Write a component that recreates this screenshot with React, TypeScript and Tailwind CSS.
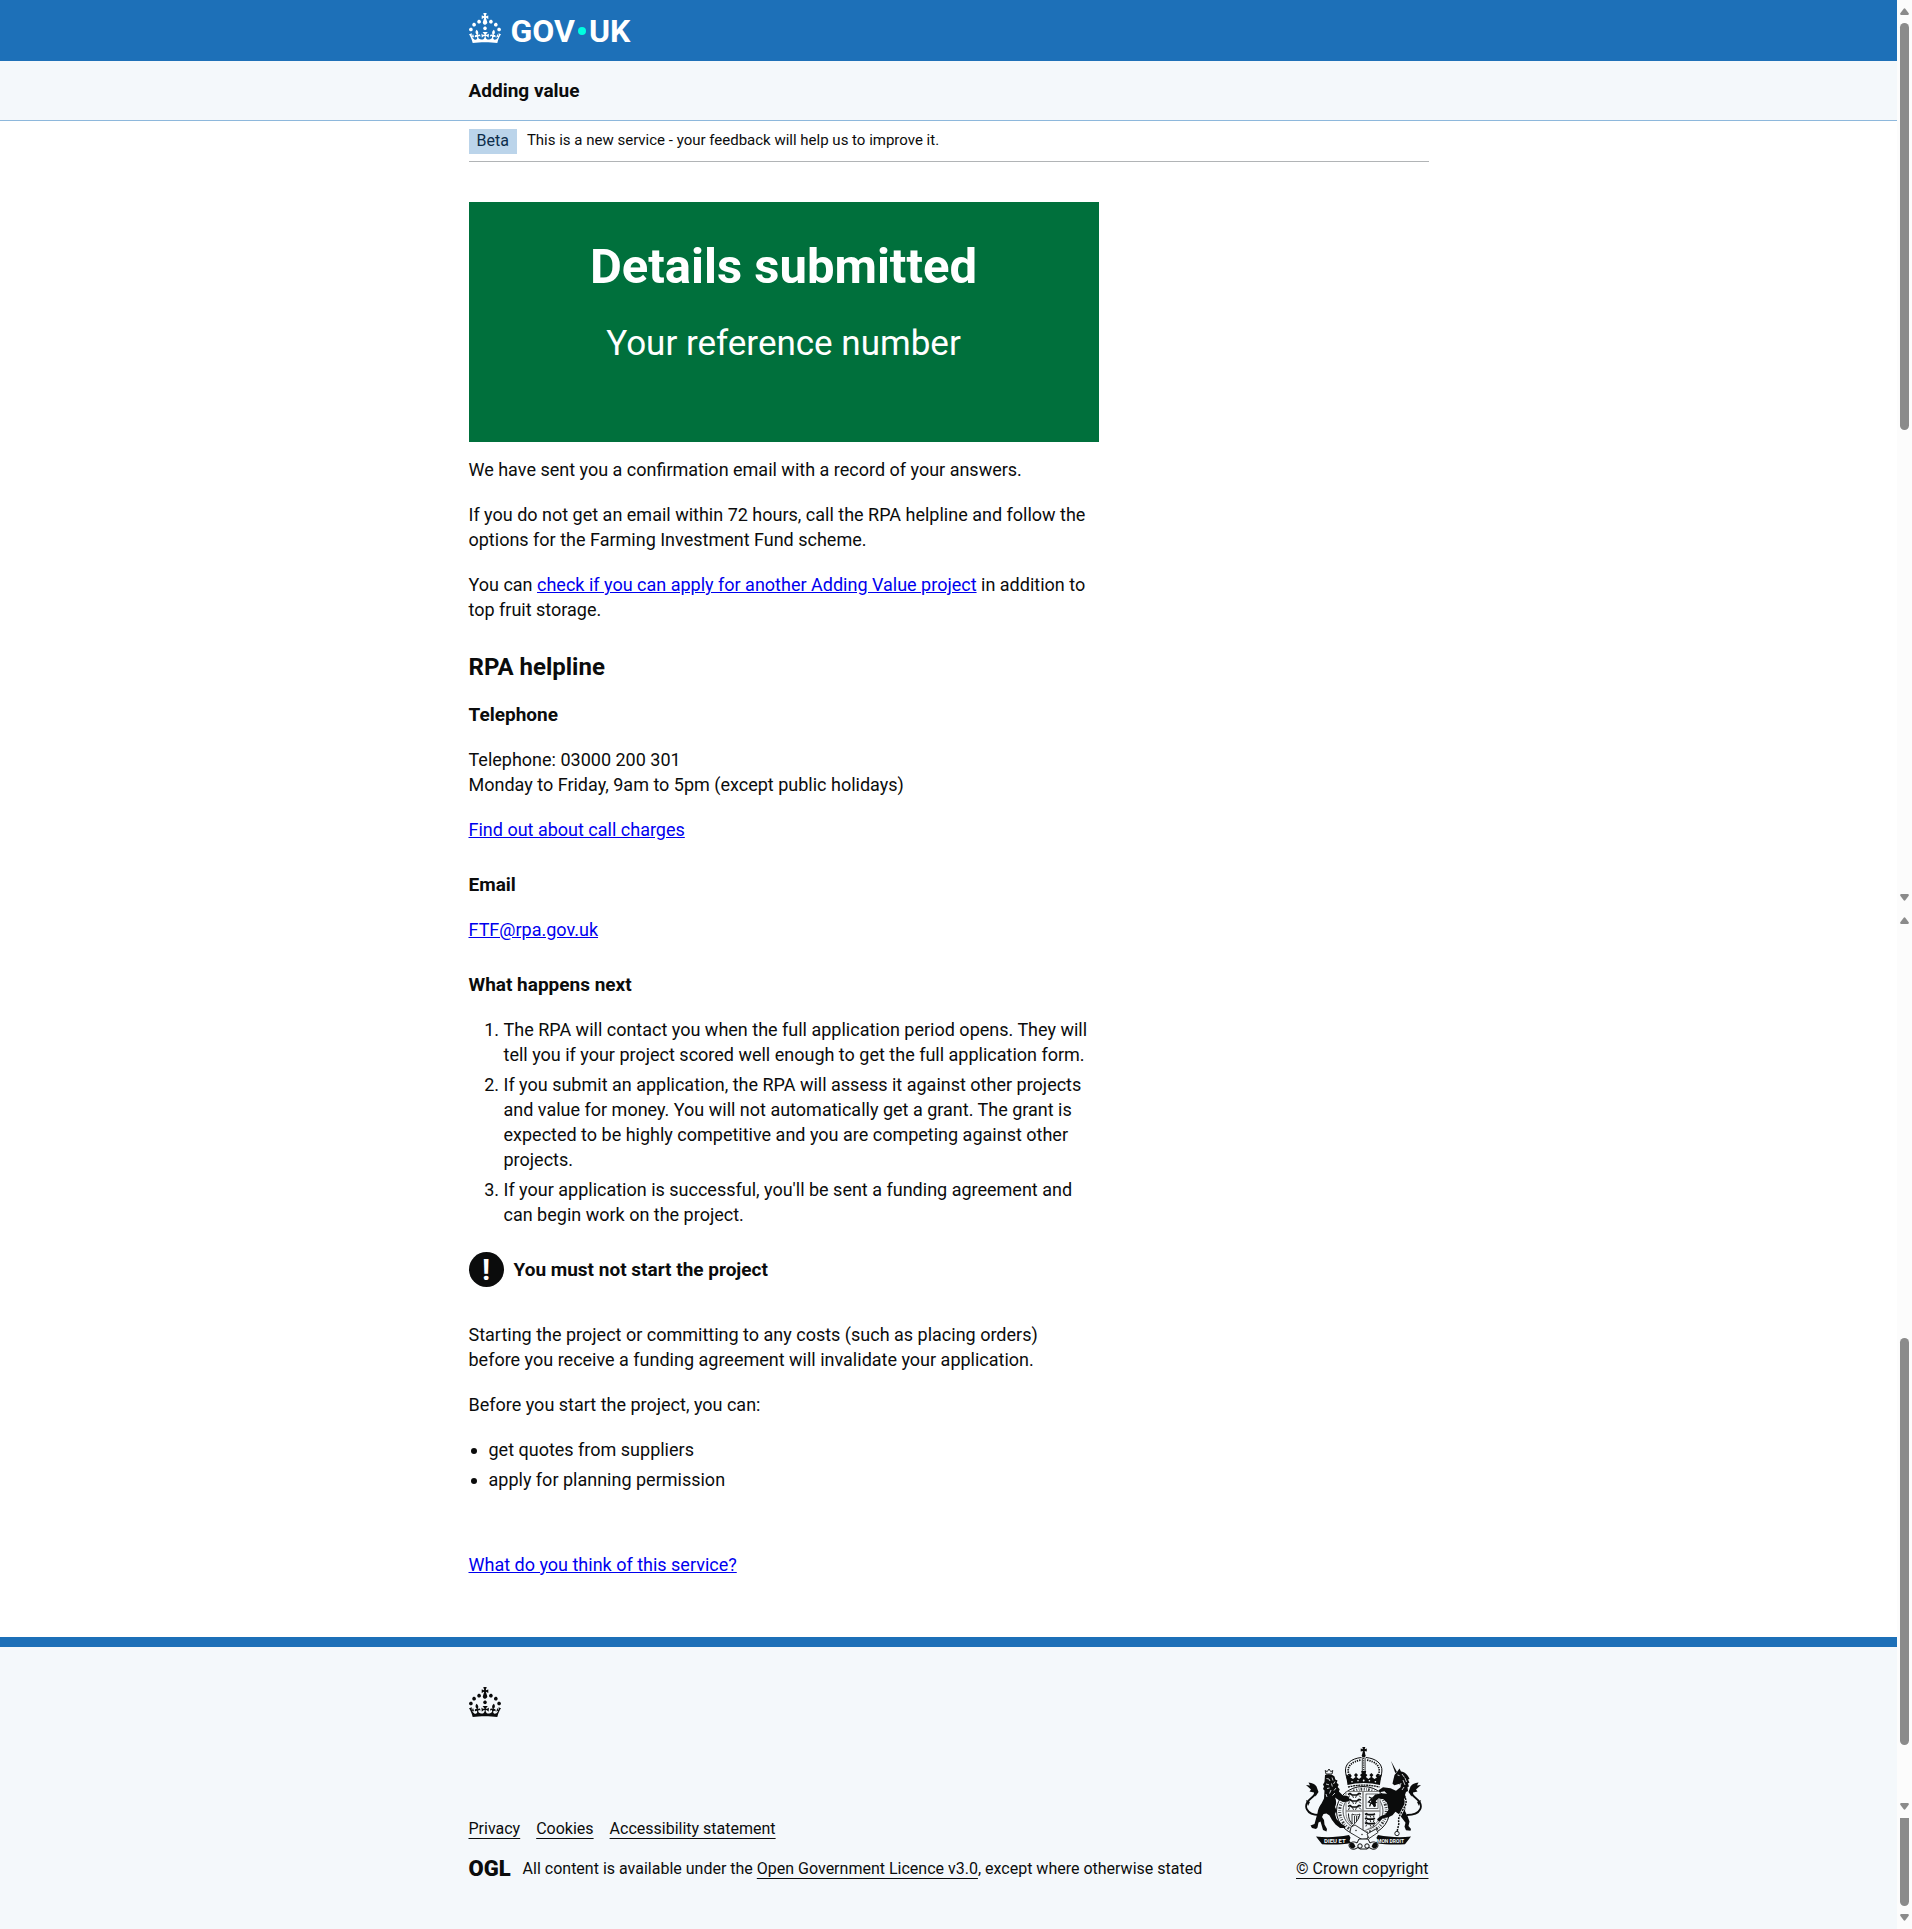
import type { ReactNode } from "react";

const CROWN_PATH =
  "M22.6 10.4c-1 .4-2-.1-2.4-1-.4-.9.1-2 1-2.4.9-.4 2 .1 2.4 1s-.1 2-1 2.4m-5.9 6.7c-.9.4-2-.1-2.4-1-.4-.9.1-2 1-2.4.9-.4 2 .1 2.4 1s-.1 2-1 2.4m10.8-3.7c-1 .4-2-.1-2.4-1-.4-.9.1-2 1-2.4.9-.4 2 .1 2.4 1s0 2-1 2.4m3.3 4.8c-1 .4-2-.1-2.4-1-.4-.9.1-2 1-2.4.9-.4 2 .1 2.4 1s-.1 2-1 2.4M17 4.7l2.3 1.2V2.5l-2.3.7-.2-.2.9-3h-3.4l.9 3-.2.2c-.1.1-2.3-.7-2.3-.7v3.4L15 4.7c.1.1.1.2.2.2l-1.3 4c-.1.2-.1.4-.1.6 0 1.1.8 2 1.9 2.2h.7c1-.2 1.9-1.1 1.9-2.1 0-.2 0-.4-.1-.6l-1.3-4c-.1-.2 0-.2.1-.3m-7.6 5.7c.9.4 2-.1 2.4-1 .4-.9-.1-2-1-2.4-.9-.4-2 .1-2.4 1s0 2 1 2.4m-5 3c.9.4 2-.1 2.4-1 .4-.9-.1-2-1-2.4-.9-.4-2 .1-2.4 1s.1 2 1 2.4m-3.2 4.8c.9.4 2-.1 2.4-1 .4-.9-.1-2-1-2.4-.9-.4-2 .1-2.4 1s0 2 1 2.4m14.8 11c4.4 0 8.6.3 12.3.8 1.1-4.5 2.4-7 3.7-8.8l-2.5-.9c.2 1.3.3 1.9 0 2.7-.4-.4-.8-1.1-1.1-2.3l-1.2 4c.7-.5 1.3-.8 2-.9-1.1 2.5-2.6 3.1-3.5 3-1.1-.2-1.7-1.2-1.5-2.1.3-1.2 1.5-1.5 2.1-.1 1.1-2.3-.8-3-2-2.3 1.9-1.9 2.1-3.5.6-5.6-2.1 1.6-2.1 3.2-1.2 5.5-1.2-1.4-3.2-.6-2.5 1.6.9-1.4 2.1-.5 1.9.8-.2 1.1-1.7 2.1-3.5 1.9-2.7-.2-2.9-2.1-2.9-3.6.7-.1 1.9.5 2.9 1.9l.4-4.3c-1.1 1.1-2.1 1.4-3.2 1.4.4-1.2 2.1-3 2.1-3h-5.4s1.7 1.9 2.1 3c-1.1 0-2.1-.2-3.2-1.4l.4 4.3c1-1.4 2.2-2 2.9-1.9-.1 1.5-.2 3.4-2.9 3.6-1.9.2-3.4-.8-3.5-1.9-.2-1.3 1-2.2 1.9-.8.7-2.3-1.2-3-2.5-1.6.9-2.2.9-3.9-1.2-5.5-1.5 2-1.3 3.7.6 5.6-1.2-.7-3.1 0-2 2.3.6-1.4 1.8-1.1 2.1.1.2.9-.3 1.9-1.5 2.1-.9.2-2.4-.5-3.5-3 .6 0 1.2.3 2 .9l-1.2-4c-.3 1.1-.7 1.9-1.1 2.3-.3-.8-.2-1.4 0-2.7l-2.9.9C1.3 23 2.6 25.5 3.7 30c3.7-.5 7.9-.8 12.3-.8";

function Crown() {
  return (
    <svg className="h-[30px] w-8 shrink-0" viewBox="0 0 32 30" fill="currentColor" aria-hidden="true">
      <path d={CROWN_PATH} />
    </svg>
  );
}

function RoyalArms() {
  return (
    <svg className="mr-[7px] h-[103px] w-[117px]" viewBox="0 0 117 103" fill="#0b0c0c" stroke="none" aria-hidden="true">
      {/* Garter */}
      <g fill="none" stroke="#0b0c0c">
        <ellipse cx="58" cy="64" rx="26.5" ry="24.5" fill="#f4f8fb" />
        <ellipse cx="58" cy="64" rx="20" ry="19" strokeWidth=".7" />
        <ellipse cx="58" cy="64" rx="23.3" ry="21.8" strokeWidth="3" strokeDasharray="1 1.5 .6 1.2 1.7 1.6" opacity=".8" />
      </g>

      {/* Crown */}
      <path d="M57.3 0h3l-.6 2.200 2.100-.6v3l-2.100-.7.500 3.100h-2.900l.6-3.100-2.200.7v-3l2.200.6z" />
      <circle cx="58.700" cy="8.500" r="1.900" />
      <g fill="none" stroke="#0b0c0c">
        <path d="M56.500 10.500C46 11.500 40 17 40.500 24c.3 4 1.200 7 2.500 10M61 10.500C71.400 11.500 77.400 17 76.900 24c-.3 4-1.200 7-2.500 10" strokeWidth="1" />
        <path d="M55.500 13.200C47 14.500 42.800 19 43.200 24c.2 3 1.200 6 1.800 8.500M62 13.200C70.500 14.500 74.600 19 74.200 24c-.2 3-1.200 6-1.800 8.500" strokeWidth="1.700" strokeDasharray="1.300 1" />
        <path d="M57.300 10.500v16M60.100 10.500v16" strokeWidth=".8" />
        <path d="M58.700 11v14" strokeWidth="1" strokeDasharray="1.200 1" />
      </g>
      <path d="M42.500 38 41 27.500l2.500 1L45 26.500 46.800 29l-1.300 1.500L48 32l2.500-2-1.500-2 2-2 2 2-1.500 2 2.500 2 2.500-2-1.500-2 1.800-1.500-.6-2.500h5l-.6 2.500 1.800 1.500-1.500 2 2.500 2 2.500-2-1.500-2 2-2 2 2-1.500 2 2.500 2 2.500-1.500-1.300-1.500 1.800-2.500 1.500 2 2.500-1L74.900 38c-10-2.700-22.400-2.700-32.400 0z" />
      <path d="M43 40c10-2.500 21.400-2.500 31.400 0" fill="none" stroke="#0b0c0c" strokeWidth="1.300" strokeDasharray="2 .6" />
      <g fill="#f4f8fb">
        <circle cx="47" cy="34.800" r=".8" />
        <circle cx="53" cy="33.800" r=".8" />
        <circle cx="58.700" cy="33.500" r=".9" />
        <circle cx="64.400" cy="33.800" r=".8" />
        <circle cx="70.400" cy="34.800" r=".8" />
      </g>

      {/* Shield */}
      <path d="M41 44.500h34v22c0 9-8 14-17 18-9-4-17-9-17-18z" fill="#f4f8fb" stroke="#777" strokeWidth=".9" />
      <path d="M58 44.500v39M41 64h34" stroke="#888" strokeWidth="1.600" fill="none" />
      <g fill="none" stroke="#0b0c0c">
        {[47.5, 53.5, 59.5].map((y) => (
          <g key={y}>
            <path d={`M43 ${y}l2-1 2 1.500h5l2-1.500 2 .6`} strokeWidth="1.600" />
            <path d={`M44.500 ${y + 1}l-1 2.500M47.500 ${y + 1}l1 2.400M51.500 ${y + 1}l-1 2.400M54 ${y + 1}l2 2`} strokeWidth=".9" />
          </g>
        ))}
        {[67.5, 72, 76.5].map((y) => (
          <g key={y}>
            <path d={`M60 ${y}l1.500-.8 1.500 1h5l2-1`} strokeWidth="1.700" />
            <path d={`M61.500 ${y + 1}l-.6 2M65 ${y + 1}l.8 2M69 ${y + 1}l-.6 2`} strokeWidth=".9" />
          </g>
        ))}
        <rect x="61" y="47" width="12" height="14.500" strokeWidth=".6" />
        <path d="M64 50l3 1.500 3-2.500-1.500 4.500 2.500 2-3.500 1 2 3M66.500 52l-3 3 2.500 1-1.500 3.500M67 52v5" strokeWidth="1.300" />
        <path d="M47 67v10M47 67c3 1.500 6 1 8 0-1 5-4 9-8 12M49.500 69v7.500M51.500 69v5.500M53.300 69v3" strokeWidth=".8" />
        <path d="M43.500 66.500c0 5 1 8 4 10.500" strokeWidth="1" />
      </g>

      {/* Buckle and strap */}
      <path d="M46 80l4-2 14 9-2 5-5 .5-12-7z" fill="#f4f8fb" stroke="#0b0c0c" strokeWidth=".8" />
      <path d="M62 87l9-5 2 3.500-9 6z" fill="#f4f8fb" stroke="#0b0c0c" strokeWidth=".8" />
      <circle cx="51" cy="83.500" r=".7" />
      <circle cx="57" cy="87.500" r=".7" />

      {/* Lion */}
      <path d="M21 27l-.8-3.500 2 1.200 1.800-2.700 1.800 2.700 2-1.200-.8 3.500z" fill="none" stroke="#0b0c0c" strokeWidth=".9" />
      <path d="M20 28c3-1.200 7-.8 9.500 1.500l.8 3 2.200 1-.8 2.200 2 2-1 2.300 2 2.200-.8 2.200 4 4 5.200.8 1.400 2.800-1 2.500-4.500.5-5.500-2-3.500-2.500c1.500 3 1.500 6.500 0 9.500 1.500 2.500 1.500 4.500 0 7l1.500 5 4.500 4.500 4 2.500v2h-5l-4.500-3.500-3.500-4.500-2.500-4.500-3-2-3 .5-1.500 3 2 3 .5 4.500 2.500 4.500-.5 2.500-3.500-1.500-1-3.500-1.500-5-2 1-1 5-1.500 1.500-4-1-1.500-2.500 4-1.500 1.500-5.500 1.500-5.500c.5-4 2-7 4-9.500l2.500-5 .5-8-1.500-1.500 1-2.500-1-2 1.500-2.500z" />
      <path d="M21.500 31.500l2.500.5 1 2M27 30.500l1 3M21 37l3 .8M30 34.500l-1.500 2.500M26.500 36.500l.8 3M22 41.500l2.500-.5M31 41l-2 2.500M26 43l-1.500 3.500M30 46l-2.500 2.500M21 47l1 3" stroke="#f4f8fb" strokeWidth=".8" fill="none" />
      <path d="M14 68c-5 0-10-1.500-12-5.500-3-5.500 2-9.500 5.500-12.500 3-2.500 3.500-5 1-7.500" fill="none" stroke="#0b0c0c" strokeWidth="1.800" />
      <path d="M1 38l4 .5-1.500-3c4 .3 6 1.500 8 4l2 5.500-3 4.500-1.500-4-4.500-1 1.500-2zM1 53l4 2-2 4z" />

      {/* Unicorn */}
      <path d="M86 14l6 11-1.700.9z" />
      <path d="M89.500 28l2.500-3 2.500-3.500 1.500 3c4 .5 7 3.500 8.500 7.500l-1.500.5 1.500 3-1.500 1 1 3-1.500.5.500 4-2 1-1 3c2 4 2 8 .5 12l-.5 4 2.500 5 2 5.500-1 4.500 2.500 3-.5 1.800-4.500-.5-1.500-3.500 1-4-3-4-3.500-4.500-3.500-2.500-3 3.500-4 2-5.500 1-4 3.500-2-2.500 3.500-3 5-2 3-4.500-1.500-7-3.500-3.500-5-1-3 3 .5 5-2 1-3-6 4-6.500 6-1.500 6 .5-2.500-2.500-5 1-1-2 4.500-3 7.500 1 5.500 2.500 4.500-3.500-1-3.500-5 1.500-2-1.500.5-2.500z" />
      <path d="M92.500 28l2 .6M97 27l2.500 3.500M100 31l1.500 4M98 33l2 5M99 40l-2 3M96 36l-1 4" stroke="#f4f8fb" strokeWidth=".8" fill="none" />
      <path d="M102 68c5 0 11-1.500 13-5.500 3-5.500-2-9.500-5.500-12.500-3-2.500-3.500-5-1-7.500" fill="none" stroke="#0b0c0c" strokeWidth="1.800" />
      <path d="M116 38l-4 .5 1.500-3c-4 .3-6 1.500-8 4l-2 5.500 3 4.500 1.500-4 4.500-1-1.500-2zM116 53l-4 2 2 4z" />
      <path d="M100 51c5 8-9 16-6 25l-2 9" stroke="#f4f8fb" strokeWidth="2.600" fill="none" />
      <path d="M100 51c5 8-9 16-6 25l-2 9" stroke="#0b0c0c" strokeWidth="1.500" fill="none" strokeDasharray="2 1" />
      <circle cx="92" cy="86.500" r="2.200" fill="none" stroke="#0b0c0c" strokeWidth=".9" />

      {/* Motto scroll */}
      <path d="M11 89.500c12 1.500 22 .5 33-1.500l1.500 2.500-1 3.500 2 2c-9 1.500-19 2-29.500 1.200z" />
      <path d="M106 89.500c-12 1.500-22 .5-33-1.500l-1.500 2.500 1 3.500-2 2c9 1.500 19 2 29.500 1.200z" />
      <text x="19" y="96" fontSize="6" fontWeight="700" fill="#f4f8fb">DIEU ET</text>
      <text x="72" y="96" fontSize="5" fontWeight="700" fill="#f4f8fb">MON DROIT</text>
      <path d="M44 98c1-3 5-4 8-2l2-4h9l2 4c3-2 7-1 8 2 0 3-3 5-6 4l-3-1.500-2 1.500h-7l-2-1.500-3 1.500c-3 1-6-1-6-4z" fill="#f4f8fb" stroke="#0b0c0c" strokeWidth="1" />
      <path d="M44.500 98c0-2.500 3-3 4.500-1.500l1.500 3-2 2c-2 .5-4-1-4-3.500zM72.500 98c0-2.500-3-3-4.500-1.500l-1.500 3 2 2c2 .5 4-1 4-3.500z" />
      <circle cx="55" cy="99" r="2.200" fill="none" stroke="#0b0c0c" strokeWidth="1" />
      <circle cx="62" cy="99" r="2.200" fill="none" stroke="#0b0c0c" strokeWidth="1" />
    </svg>
  );
}

function Container({ children }: { children: ReactNode }) {
  return <div className="mx-auto w-full max-w-[960px]">{children}</div>;
}

function TextLink({ children }: { children: ReactNode }) {
  return (
    <a href="#" className="text-[#0000ee] underline">
      {children}
    </a>
  );
}

function FooterLink({ children }: { children: ReactNode }) {
  return (
    <a href="#" className="underline decoration-1 underline-offset-4 [text-decoration-skip-ink:none]">
      {children}
    </a>
  );
}

function SmallHeading({ children }: { children: ReactNode }) {
  return <h3 className="text-[19px] leading-[25px] font-bold">{children}</h3>;
}

function Arrow({ down = false }: { down?: boolean }) {
  return (
    <svg className="h-[7px] w-[9px] shrink-0" viewBox="0 0 9 7" fill="#8b8b8b" aria-hidden="true">
      <path d={down ? "M1 0h7q1.500.5.5 2L5.500 6q-1 1.500-2 0L.5 2Q-.5.5 1 0z" : "M1 7h7q1.500-.5.5-2L5.500 1q-1-1.500-2 0L.5 5Q-.5 6.500 1 7z"} />
    </svg>
  );
}

function ScrollStrip() {
  return (
    <div className="flex w-[15px] shrink-0 flex-col items-center bg-[#fcfcfc] pt-2" aria-hidden="true">
      <Arrow />
      <div className="mt-2 h-[407px] w-[9px] rounded-full bg-[#8b8b8b]" />
      <div className="mt-[464px] flex flex-col gap-4">
        <Arrow down />
        <Arrow />
      </div>
      <div className="mt-[414px] h-[407px] w-[9px] rounded-full bg-[#8b8b8b]" />
      <div className="mt-[58px] flex flex-col gap-2">
        <Arrow down />
        <div className="h-[88px] w-[9px] rounded-b-full bg-[#8b8b8b]" />
        <Arrow down />
      </div>
    </div>
  );
}

export default function App() {
  return (
    <div className="flex min-h-screen bg-white font-['Roboto',sans-serif] text-[#0b0c0c]">
      <div className="flex min-w-0 flex-1 flex-col">
        <header>
          <div className="bg-[#1d70b8] text-white">
            <Container>
              <a href="#" className="flex h-[61px] items-center gap-[10px] pb-[5px]" aria-label="GOV.UK">
                <Crown />
                <span className="flex items-center pt-[6px] text-[32px] leading-8 font-bold">
                  GOV
                  <span className="mx-[3px] size-2 rounded-full bg-[#00ffe0]" />
                  UK
                </span>
              </a>
            </Container>
          </div>
          <div className="border-b border-[#8eb8dc] bg-[#f4f8fb]">
            <Container>
              <div className="flex h-[59px] items-center">
                <a href="#" className="text-[19px] leading-[25px] font-bold">
                  Adding value
                </a>
              </div>
            </Container>
          </div>
        </header>

        <Container>
          <div className="flex items-start gap-[10px] border-b border-[#b1b4b6] pt-2 pb-[7px]">
            <strong className="bg-[#bbd4ea] px-2 pb-[2px] text-[16px] leading-[23px] font-normal text-[#0c2d4a]">Beta</strong>
            <span className="text-[15px] leading-[23px]">
              This is a new service - your feedback will help us to improve it.
            </span>
          </div>

          <main className="max-w-[630px] pt-10 pb-[60px] text-[18px] leading-[25px]">
            <div className="flex h-60 flex-col items-center bg-[#00703c] pt-10 text-center text-white">
              <h1 className="text-[49px] leading-[50px] font-bold">Details submitted</h1>
              <div className="mt-8 text-[35px] leading-10">Your reference number</div>
            </div>

            <div className="mt-[15px] flex flex-col gap-5">
              <p>We have sent you a confirmation email with a record of your answers.</p>
              <p>
                If you do not get an email within 72 hours, call the RPA helpline and follow the options for the
                Farming Investment Fund scheme.
              </p>
              <p>
                You can <TextLink>check if you can apply for another Adding Value project</TextLink> in addition to
                top fruit storage.
              </p>
            </div>

            <h2 className="mt-[30px] text-2xl leading-[30px] font-bold">RPA helpline</h2>
            <div className="mt-5 flex flex-col gap-5">
              <SmallHeading>Telephone</SmallHeading>
              <p>
                Telephone: 03000 200 301
                <br />
                Monday to Friday, 9am to 5pm (except public holidays)
              </p>
              <p>
                <TextLink>Find out about call charges</TextLink>
              </p>
            </div>
            <div className="mt-[30px] flex flex-col gap-5">
              <SmallHeading>Email</SmallHeading>
              <p>
                <TextLink>FTF@rpa.gov.uk</TextLink>
              </p>
            </div>
            <div className="mt-[30px] flex flex-col gap-5">
              <SmallHeading>What happens next</SmallHeading>
              <ol className="flex list-decimal flex-col gap-[5px] pl-[35px]">
                <li>
                  The RPA will contact you when the full application period opens. They will tell you if your project
                  scored well enough to get the full application form.
                </li>
                <li>
                  If you submit an application, the RPA will assess it against other projects and value for money. You
                  will not automatically get a grant. The grant is expected to be highly competitive and you are
                  competing against other projects.
                </li>
                <li>
                  If your application is successful, you'll be sent a funding agreement and can begin work on the
                  project.
                </li>
              </ol>
            </div>

            <div className="mt-[25px] flex items-center gap-[10px]">
              <span
                className="flex size-[35px] items-center justify-center rounded-full bg-[#0b0c0c] text-[30px] leading-[35px] font-bold text-white"
                aria-hidden="true"
              >
                !
              </span>
              <strong className="text-[19px] leading-[25px] font-bold">You must not start the project</strong>
            </div>

            <div className="mt-[35px] flex flex-col gap-5">
              <p className="pr-8">
                Starting the project or committing to any costs (such as placing orders) before you receive a funding
                agreement will invalidate your application.
              </p>
              <p>Before you start the project, you can:</p>
              <ul className="flex list-disc flex-col gap-[5px] pl-5">
                <li>get quotes from suppliers</li>
                <li>apply for planning permission</li>
              </ul>
            </div>

            <p className="mt-[60px]">
              <TextLink>What do you think of this service?</TextLink>
            </p>
          </main>
        </Container>

        <footer className="grow border-t-[10px] border-[#1d70b8] bg-[#f4f8fb] pt-10 pb-[50px] text-[16px] leading-5">
          <Container>
            <Crown />
            <div className="mt-[30px] flex items-end justify-between">
              <div>
                <ul className="flex gap-4">
                  <li>
                    <FooterLink>Privacy</FooterLink>
                  </li>
                  <li>
                    <FooterLink>Cookies</FooterLink>
                  </li>
                  <li>
                    <FooterLink>Accessibility statement</FooterLink>
                  </li>
                </ul>
                <div className="mt-5 flex items-center gap-3">
                  <span className="text-[22px] leading-5 font-black">OGL</span>
                  <p>
                    All content is available under the <FooterLink>Open Government Licence v3.0</FooterLink>, except
                    where otherwise stated
                  </p>
                </div>
              </div>
              <div className="flex flex-col items-end gap-[9px]">
                <RoyalArms />
                <FooterLink>© Crown copyright</FooterLink>
              </div>
            </div>
          </Container>
        </footer>
      </div>
      <ScrollStrip />
    </div>
  );
}
